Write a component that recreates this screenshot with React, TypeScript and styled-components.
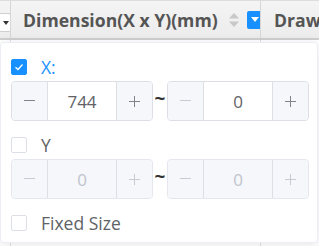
import React, {useState} from 'react';
import styled, {createGlobalStyle} from 'styled-components';

const GlobalStyle = createGlobalStyle`
  html, body {
    margin: 0;
    padding: 0;
    background: #ffffff;
    font-family: "Open Sans", "Noto Sans", sans-serif;
    overflow: hidden;
  }
`;

const Page = styled.div`
  width: 319px;
  height: 246px;
  position: relative;
  overflow: hidden;
`;

const HeaderRow = styled.div`
  display: grid;
  grid-template-columns: 11px 250px 1fr;
  height: 37px;
  border-top: 1px solid #dcdcdc;
  border-bottom: 2px solid #cfcfcf;
  background: linear-gradient(#f4f4f4, #ececec);
`;

const HeaderCell = styled.div<{$last?: boolean}>`
  display: flex;
  align-items: center;
  overflow: hidden;
  border-right: ${p => (p.$last ? 'none' : '1px solid #d6d6d6')};
  padding-left: ${p => (p.$last ? '13px' : '12px')};
  font-size: 17.6px;
  font-weight: 700;
  color: #555555;
  white-space: nowrap;
`;

const EdgeCell = styled.div`
  position: relative;
  border-right: 1px solid #d6d6d6;
  overflow: hidden;
`;

const EdgeTrigger = styled.div`
  position: absolute;
  left: -6px;
  top: 12px;
  width: 14px;
  height: 17px;
  background: #ffffff;
  border: 1px solid #d0d0d0;
  border-radius: 2px;
  display: flex;
  align-items: center;
  justify-content: flex-end;
  padding-right: 1px;
`;

const SortIcon = styled.svg`
  margin-left: 11px;
  flex-shrink: 0;
`;

const FilterTrigger = styled.div`
  margin-left: 8px;
  width: 16px;
  height: 18px;
  flex-shrink: 0;
  background: #1890ff;
  border-radius: 2px;
  display: flex;
  align-items: center;
  justify-content: center;
`;

const Body = styled.div`
  position: relative;
  display: grid;
  grid-template-columns: 11px 250px 1fr;
  height: 206px;
`;

const BodyCol = styled.div`
  border-right: 1px solid #e2e2e2;
`;

const Popover = styled.div`
  position: absolute;
  left: 0;
  top: 2px;
  width: 318px;
  height: 201px;
  box-sizing: border-box;
  background: #ffffff;
  border: 1px solid #ebeef5;
  border-radius: 4px;
  box-shadow: 0 2px 12px rgba(0, 0, 0, 0.1);
  padding: 15px 0 0 10px;
  display: flex;
  flex-direction: column;
`;

const Section = styled.div`
  display: flex;
  flex-direction: column;
  gap: 6px;
  margin-bottom: 15px;
`;

const CheckRow = styled.label<{$checked?: boolean}>`
  display: flex;
  align-items: center;
  gap: 14px;
  height: 17px;
  font-size: 17.5px;
  color: ${p => (p.$checked ? '#1890ff' : '#606266')};
  cursor: pointer;
`;

const Box = styled.span<{$checked?: boolean}>`
  width: 16px;
  height: 16px;
  box-sizing: border-box;
  border-radius: 2px;
  border: 1px solid ${p => (p.$checked ? '#1890ff' : '#dcdfe6')};
  background: ${p => (p.$checked ? '#1890ff' : '#ffffff')};
  display: flex;
  align-items: center;
  justify-content: center;
`;

const RangeRow = styled.div`
  display: flex;
  align-items: center;
`;

const Tilde = styled.span`
  width: 14px;
  text-align: center;
  font-size: 19px;
  font-weight: 700;
  color: #333333;
  margin-top: -7px;
`;

const NumberBox = styled.div<{$disabled?: boolean}>`
  display: grid;
  grid-template-columns: 36px 1fr 36px;
  width: 142px;
  height: 40px;
  box-sizing: border-box;
  border: 1px solid ${p => (p.$disabled ? '#e4e7ed' : '#dcdfe6')};
  border-radius: 4px;
  overflow: hidden;
  background: ${p => (p.$disabled ? '#f5f7fa' : '#ffffff')};
`;

const StepButton = styled.button<{$side: 'left' | 'right'; $muted?: boolean}>`
  all: unset;
  display: flex;
  align-items: center;
  justify-content: center;
  background: #f5f7fa;
  border-${p => (p.$side === 'left' ? 'right' : 'left')}: 1px solid #dcdfe6;
  color: ${p => (p.$muted ? '#c8cbd2' : '#80838a')};
`;

const Value = styled.div<{$disabled?: boolean}>`
  display: flex;
  align-items: center;
  justify-content: center;
  font-size: 17px;
  color: ${p => (p.$disabled ? '#c0c4cc' : '#606266')};
`;

function Check({checked}: {checked: boolean}) {
  return (
    <Box $checked={checked}>
      {checked && (
        <svg width="10" height="8" viewBox="0 0 10 8">
          <path d="M1.5 4.2 L4 6.5 L8.5 1.5" fill="none" stroke="#fff" strokeWidth="1.3" />
        </svg>
      )}
    </Box>
  );
}

function Stepper({value, disabled, minReached}: {value: number; disabled?: boolean; minReached?: boolean}) {
  return (
    <NumberBox $disabled={disabled}>
      <StepButton $side="left" $muted={disabled || minReached}>
        <svg width="11" height="2" viewBox="0 0 11 2">
          <rect width="11" height="1" fill="currentColor" />
        </svg>
      </StepButton>
      <Value $disabled={disabled}>{value}</Value>
      <StepButton $side="right" $muted={disabled}>
        <svg width="11" height="11" viewBox="0 0 11 11">
          <rect y="5" width="11" height="1" fill="currentColor" />
          <rect x="5" width="1" height="11" fill="currentColor" />
        </svg>
      </StepButton>
    </NumberBox>
  );
}

export default function App() {
  const [useX, setUseX] = useState(true);
  const [useY, setUseY] = useState(false);
  const [fixed, setFixed] = useState(false);

  return (
    <Page>
      <GlobalStyle />
      <HeaderRow>
        <EdgeCell>
          <EdgeTrigger>
            <svg width="6" height="4" viewBox="0 0 6 4">
              <path d="M0 0 H6 L3 4 Z" fill="#333" />
            </svg>
          </EdgeTrigger>
        </EdgeCell>
        <HeaderCell>
          Dimension(X x Y)(mm)
          <SortIcon width="10" height="14" viewBox="0 0 10 14">
            <path d="M5 0 L10 5.5 H0 Z" fill="#c8c8c8" />
            <path d="M0 8.5 H10 L5 14 Z" fill="#c8c8c8" />
          </SortIcon>
          <FilterTrigger>
            <svg width="8" height="5" viewBox="0 0 8 5">
              <path d="M0 0 H8 L4 5 Z" fill="#fff" />
            </svg>
          </FilterTrigger>
        </HeaderCell>
        <HeaderCell $last>Drawing</HeaderCell>
      </HeaderRow>
      <Body>
        <BodyCol />
        <BodyCol />
        <div />
        <Popover>
          <Section>
            <CheckRow $checked={useX} onClick={() => setUseX(!useX)}>
              <Check checked={useX} />
              X:
            </CheckRow>
            <RangeRow>
              <Stepper value={744} disabled={!useX} />
              <Tilde>~</Tilde>
              <Stepper value={0} disabled={!useX} minReached />
            </RangeRow>
          </Section>
          <Section>
            <CheckRow $checked={useY} onClick={() => setUseY(!useY)}>
              <Check checked={useY} />
              Y
            </CheckRow>
            <RangeRow>
              <Stepper value={0} disabled={!useY} minReached />
              <Tilde>~</Tilde>
              <Stepper value={0} disabled={!useY} minReached />
            </RangeRow>
          </Section>
          <CheckRow $checked={fixed} onClick={() => setFixed(!fixed)}>
            <Check checked={fixed} />
            Fixed Size
          </CheckRow>
        </Popover>
      </Body>
    </Page>
  );
}
